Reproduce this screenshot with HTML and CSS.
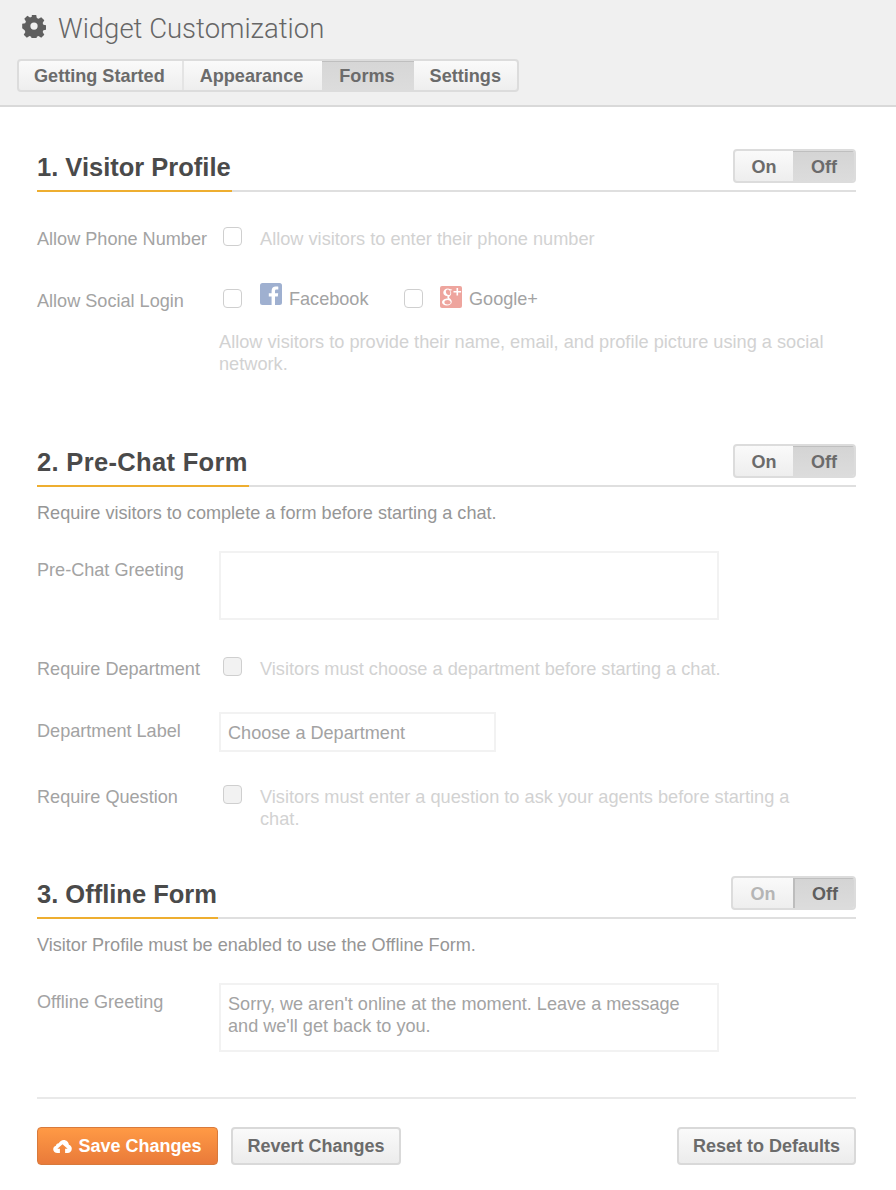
FILE: index.html
```html
<!DOCTYPE html>
<html lang="en">
<head>
<meta charset="utf-8">
<title>Widget Customization</title>
<link rel="stylesheet" href="styles.css">
</head>
<body>
<header class="top">
  <h1 class="title">
    <svg class="gear" viewBox="0 0 24 24" width="24" height="24"><path fill-rule="evenodd" fill="#5f5f5f" d="M9.6 0h4.8l.7 3.3 1.9.8 2.9-1.8 3.4 3.4-1.8 2.9.8 1.9 3.3.7v4.8l-3.3.7-.8 1.9 1.8 2.9-3.4 3.4-2.9-1.8-1.9.8-.7 3.3H9.6l-.7-3.3-1.9-.8-2.9 1.8-3.4-3.4 1.8-2.9-.8-1.9L-1 14.4V9.6l3.3-.7.8-1.9L1.3 4.1l3.4-3.4L7.6 2.5l1.9-.8zM12 8a4 4 0 1 0 0 8 4 4 0 0 0 0-8z" transform="translate(1.1 1.1) scale(.91)"/></svg>
    <span>Widget Customization</span>
  </h1>
  <nav class="tabs">
    <a class="tab tab-first">Getting Started</a><a class="tab tab-second">Appearance</a><a class="tab tab-active">Forms</a><a class="tab tab-last">Settings</a>
  </nav>
</header>
<main class="content">
  <section class="sec sec-1">
    <div class="sec-head">
      <h2 class="sec-title">1. Visitor Profile</h2>
      <div class="toggle"><span class="tg tg-on">On</span><span class="tg tg-off">Off</span></div>
    </div>
    <div class="row row-phone">
      <div class="label">Allow Phone Number</div>
      <span class="check"></span>
      <div class="desc">Allow visitors to enter their phone number</div>
    </div>
    <div class="row row-social">
      <div class="label">Allow Social Login</div>
      <div class="social">
        <div class="social-line">
          <span class="check"></span>
          <svg class="soc-icon" viewBox="0 0 22 22" width="22" height="22"><rect width="22" height="22" rx="2.5" fill="#9fb0d0"/><path fill="#fff" d="M15 22v-8.500h2.800l.4-3.300H15V8.200c0-1 .3-1.600 1.600-1.600h1.700V3.700c-.3 0-1.300-.1-2.500-.1-2.500 0-4.200 1.500-4.200 4.300v2.300H8.800v3.300h2.800V22z"/></svg>
          <span class="soc-name soc-fb">Facebook</span>
          <span class="check check-g"></span>
          <svg class="soc-icon soc-g" viewBox="0 0 22 22" width="22" height="22"><rect width="22" height="22" rx="2" fill="#eea59e"/><path fill="#fff" d="M8 2.500c-2.800 0-4.700 1.900-4.700 4 0 2 1.500 3.500 3.600 3.500h.7c-.2.400-.3.700-.3 1.100 0 .6.300 1 .6 1.400-2.800.2-5.900 1.200-5.900 3.800 0 2 2.200 3.200 4.800 3.200 3 0 5-1.800 5-3.700 0-2.600-2.700-3.100-2.700-4.500 0-1.200 2.100-1.600 2.100-4 0-1.200-.6-2.100-1.300-2.700h1.300l1.200-.9zM8.700 9c-1.500 0-2.800-1.600-2.800-3.300 0-1.200.7-2.200 1.800-2.200 1.500 0 2.700 1.700 2.700 3.400C10.400 8 9.800 9 8.700 9zM7.700 14c1.700 0 3 1 3 2.300 0 1.300-1.200 2.200-3 2.200-2 0-3.300-1-3.300-2.300 0-1.300 1.500-2.200 3.300-2.200zM16.500 2v3h-3v1.600h3v3h1.600v-3h3V5h-3V2z"/></svg>
          <span class="soc-name">Google+</span>
        </div>
        <p class="social-desc">Allow visitors to provide their name, email, and profile picture using a social network.</p>
      </div>
    </div>
  </section>

  <section class="sec sec-2">
    <div class="sec-head">
      <h2 class="sec-title sec-title-wide">2. Pre-Chat Form</h2>
      <div class="toggle"><span class="tg tg-on">On</span><span class="tg tg-off">Off</span></div>
    </div>
    <p class="intro">Require visitors to complete a form before starting a chat.</p>
    <div class="row row-greet">
      <div class="label">Pre-Chat Greeting</div>
      <div class="field field-area"></div>
    </div>
    <div class="row row-dept">
      <div class="label">Require Department</div>
      <span class="check check-dis"></span>
      <div class="desc">Visitors must choose a department before starting a chat.</div>
    </div>
    <div class="row row-label">
      <div class="label">Department Label</div>
      <div class="field field-line">Choose a Department</div>
    </div>
    <div class="row row-q">
      <div class="label">Require Question</div>
      <span class="check check-dis"></span>
      <div class="desc">Visitors must enter a question to ask your agents before starting a chat.</div>
    </div>
  </section>

  <section class="sec sec-3">
    <div class="sec-head">
      <h2 class="sec-title">3. Offline Form</h2>
      <div class="toggle toggle-dis"><span class="tg tg-on">On</span><span class="tg tg-off">Off</span></div>
    </div>
    <p class="intro">Visitor Profile must be enabled to use the Offline Form.</p>
    <div class="row row-greet">
      <div class="label">Offline Greeting</div>
      <div class="field field-area">Sorry, we aren't online at the moment. Leave a message and we'll get back to you.</div>
    </div>
  </section>

  <footer class="actions">
    <button class="btn btn-save">
      <svg viewBox="0 0 20 14" width="19" height="13"><path fill="#fff" fill-rule="evenodd" d="M4.500 14C2 14 0 12.300 0 10c0-1.800 1.200-3.300 2.900-3.800C3.100 4.500 4.500 3.500 6 3.600 7 1.500 9 0 11.300 0c3 0 5.400 2.300 5.600 5.200 1.800.5 3.100 2.200 3.100 4.100 0 2.500-2 4.700-4.500 4.700h-2.700V9.500h2.700L10 4.500l-5.500 5h2.700V14z"/></svg>
      Save Changes
    </button>
    <button class="btn btn-revert">Revert Changes</button>
    <button class="btn btn-reset">Reset to Defaults</button>
  </footer>
</main>
</body>
</html>
```
FILE: styles.css
```css
* { box-sizing: border-box; }
html, body { margin: 0; padding: 0; }
body {
  width: 896px;
  background: #fff;
  font-family: "Liberation Sans", Arial, sans-serif;
  font-size: 18.100px;
  color: #a3a3a3;
}
.top {
  height: 107px;
  background: #f0f0f0;
  border-bottom: 2px solid #d9d9d9;
  padding: 13px 17px 0;
}
.title {
  display: flex;
  align-items: center;
  margin: 0;
  height: 30px;
  padding-left: 5px;
  font-family: Roboto, "Liberation Sans", sans-serif;
  font-weight: 300;
  font-size: 27.500px;
  color: #666;
}
.gear { margin-right: 12px; margin-top: -5px; }
.tabs {
  display: inline-flex;
  margin-top: 16px;
  height: 33px;
  border: 2px solid #dcdcdc;
  border-radius: 4px;
  background: linear-gradient(#fafafa, #eeeeee);
}
.tab {
  display: flex;
  align-items: center;
  justify-content: center;
  height: 29px;
  font-weight: 700;
  font-size: 18.100px;
  color: #6b6b6b;
}
.tab-first { padding: 1px 17px 0 15px; border-right: 2px solid #e4e4e4; }
.tab-second { padding: 1px 19px 0 16px; }
.tab-active {
  padding: 1px 19px 0 17px;
  background: linear-gradient(#d6d6d6, #dcdcdc);
  box-shadow: inset 0 1px 0 #bfbfbf;
}
.tab-last { padding: 1px 16px 0; }
.content { padding: 0 40px 0 37px; }
.sec-head {
  display: flex;
  justify-content: space-between;
  align-items: flex-start;
  height: 43px;
  border-bottom: 2px solid #dfdfdf;
}
.sec-1 { padding-top: 42px; }
.sec-2 { padding-top: 69px; }
.sec-3 { padding-top: 46px; }
.sec-title {
  margin: 0;
  height: 43px;
  padding: 2px 1px 0 0;
  border-bottom: 2px solid #eeae30;
  font-size: 25.500px;
  line-height: 32px;
  font-weight: 700;
  color: #4a4a4a;
}
.sec-title-wide { letter-spacing: .33px; }
.toggle {
  display: flex;
  height: 34px;
  border: 2px solid #dcdcdc;
  border-radius: 4px;
  background: linear-gradient(#fafafa, #eeeeee);
  overflow: hidden;
  font-size: 18px;
  font-weight: 700;
  color: #6b6b6b;
}
.tg { display: flex; align-items: center; justify-content: center; height: 30px; padding-top: 2px; }
.tg-on { width: 58px; }
.tg-off { width: 61px; padding-left: 1px; background: linear-gradient(#d4d4d4, #dcdcdc); box-shadow: inset 0 1px 0 #bfbfbf; }
.toggle-dis .tg-on { color: #b5b5b5; width: 60px; }
.toggle-dis .tg-off { border-left: 2px solid #bdbdbd; color: #5e5e5e; }
.row { display: flex; align-items: flex-start; }
.label { width: 186px; flex: none; line-height: 22px; padding-top: 1px; }
.check {
  flex: none;
  width: 19px;
  height: 19px;
  border: 1px solid #cfcfcf;
  border-radius: 4px;
  background: #fff;
}
.check-dis { background: #f2f2f2; }
.desc { margin: 1px 0 0 18px; line-height: 22px; color: #d2d2d2; width: 556px; font-size: 18.200px; }
.row-phone { margin-top: 35px; }
.row-social { margin-top: 38px; }
.row-social .label { padding-top: 2px; }
.social { margin-left: -4px; }
.social-line { display: flex; align-items: flex-start; }
.social-line .check { margin-left: 4px; margin-top: 1px; }
.soc-icon { margin-left: 18px; margin-top: -5px; flex: none; }
.soc-g { margin-left: 17px; margin-top: -2px; }
.soc-name { margin-left: 7px; line-height: 22px; }
.soc-fb { width: 80px; margin-right: 35px; white-space: nowrap; }
.social-line .check-g { margin-left: 0; }
.social-desc { margin: 21px 0 0; line-height: 22px; color: #d2d2d2; width: 620px; font-size: 18.200px; }
.intro { margin: 15px 0 0; line-height: 22px; color: #969696; }
.field {
  border: 2px solid #f2f2f2;
  padding: 8px 7px;
  line-height: 22px;
  margin-left: -4px;
}
.field-area { width: 500px; height: 69px; }
.field-line { width: 277px; height: 40px; }
.row-greet { margin-top: 27px; }
.row-greet .label { padding-top: 8px; }
.row-dept { margin-top: 37px; }
.row-label { margin-top: 32px; }
.row-label .label { padding-top: 8px; }
.row-q { margin-top: 33px; }
.actions {
  display: flex;
  margin-top: 45px;
  padding-top: 28px;
  border-top: 2px solid #e9e9e9;
  gap: 13px;
}
.btn {
  display: flex;
  align-items: center;
  justify-content: center;
  gap: 6px;
  height: 38px;
  padding: 0;
  border: 2px solid #d9d9d9;
  border-radius: 4px;
  background: linear-gradient(#fafafa, #ececec);
  font: 700 18px "Liberation Sans", Arial, sans-serif;
  color: #6b6b6b;
}
.btn-save {
  width: 181px;
  border: 1px solid #d87a3c;
  background: linear-gradient(#ff9a45, #e97a3a);
  color: #fff;
}
.btn-revert { width: 170px; }
.btn-reset { width: 179px; margin-left: auto; }
```
